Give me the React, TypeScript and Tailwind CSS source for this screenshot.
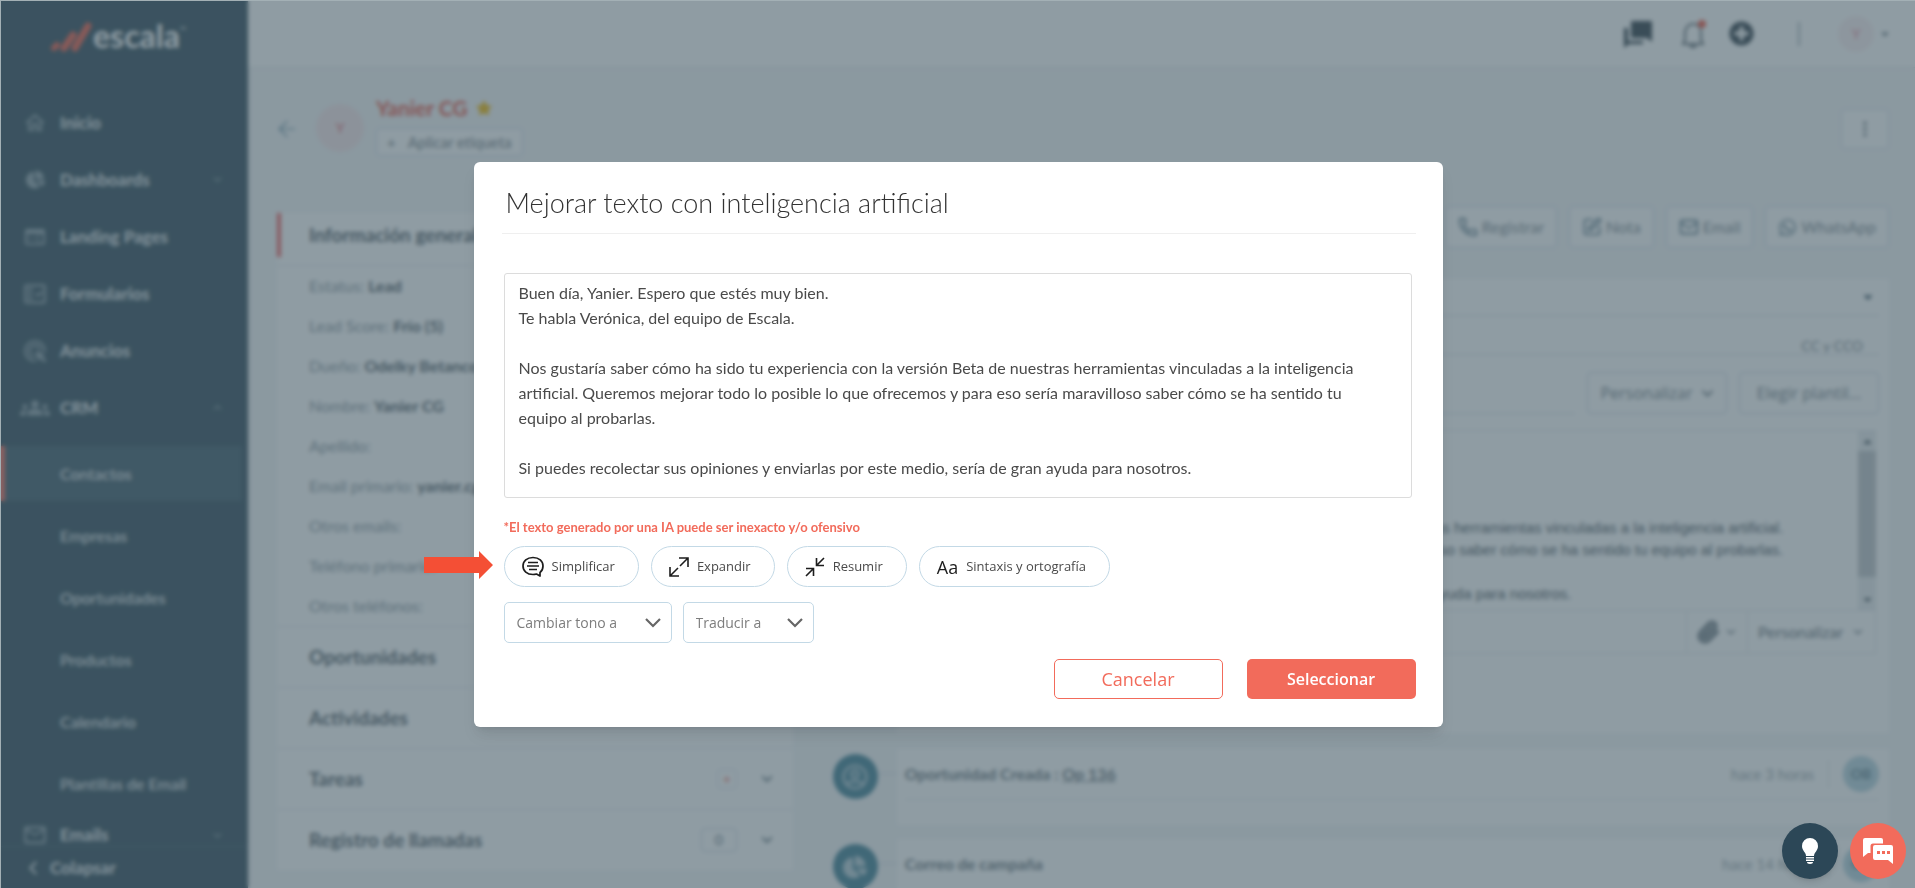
import type { ReactNode } from 'react';
import clsx from 'clsx';
import { ArrowLeft, ChevronDown, ChevronLeft, ChevronUp, Mail, MoreVertical, Paperclip, Phone, SquarePen } from 'lucide-react';
import {
  FaCaretDown,
  FaCaretUp,
  FaChartPie,
  FaChevronDown,
  FaPlusCircle,
  FaRegUserCircle,
  FaStar,
  FaWhatsapp,
} from 'react-icons/fa';
import { MdAdsClick, MdGroups, MdMailOutline, MdOutlineFactCheck, MdOutlineHome, MdWeb } from 'react-icons/md';

interface NavItem {
  label: string;
  icon: ReactNode;
  arrow?: 'up' | 'down';
}

const mainNav: NavItem[] = [
  { label: 'Inicio', icon: <MdOutlineHome size={24} /> },
  { label: 'Dashboards', icon: <FaChartPie size={19} />, arrow: 'down' },
  { label: 'Landing Pages', icon: <MdWeb size={24} /> },
  { label: 'Formularios', icon: <MdOutlineFactCheck size={26} /> },
  { label: 'Anuncios', icon: <MdAdsClick size={26} /> },
  { label: 'CRM', icon: <MdGroups size={30} />, arrow: 'up' },
];

const crmNav = ['Contactos', 'Empresas', 'Oportunidades', 'Productos', 'Calendario', 'Plantillas de Email'];

const contactFields = [
  { label: 'Estatus:', value: 'Lead' },
  { label: 'Lead Score:', value: 'Frío (5)' },
  { label: 'Dueño:', value: 'Odelky Betancourt' },
  { label: 'Nombre:', value: 'Yanier CG' },
  { label: 'Apellido:', value: '' },
  { label: 'Email primario:', value: 'yanier.cg' },
  { label: 'Otros emails:', value: '' },
  { label: 'Teléfono primario:', value: '' },
  { label: 'Otros teléfonos:', value: '' },
];

const message = `Buen día, Yanier. Espero que estés muy bien.
Te habla Verónica, del equipo de Escala.

Nos gustaría saber cómo ha sido tu experiencia con la versión Beta de nuestras herramientas vinculadas a la inteligencia artificial. Queremos mejorar todo lo posible lo que ofrecemos y para eso sería maravilloso saber cómo se ha sentido tu equipo al probarlas.

Si puedes recolectar sus opiniones y enviarlas por este medio, sería de gran ayuda para nosotros.`;

// Draft in the editor, already scrolled past the greeting
const draftLines = [
  'Nos gustaría saber cómo ha sido tu experiencia con la versión Beta de nuestras herramientas vinculadas a la inteligencia artificial.',
  'Queremos mejorar todo lo posible lo que ofrecemos y para eso sería maravilloso saber cómo se ha sentido tu equipo al probarlas.',
  '',
  'Si puedes recolectar sus opiniones y enviarlas por este medio, sería de gran ayuda para nosotros.',
];

function SidebarLink({ item, className = 'h-[57px]' }: { item: NavItem; className?: string }) {
  return (
    <a href="#" className={clsx('flex items-center pr-6 pl-5 text-[#e6ebee]', className)}>
      <span className="flex w-[30px] justify-center text-[#8fa2ac]">{item.icon}</span>
      <span className="ml-[10px] flex-1 text-[17px] leading-4 font-bold">{item.label}</span>
      {item.arrow === 'down' && <ChevronDown size={13} className="text-[#8fa2ac]" />}
      {item.arrow === 'up' && <ChevronUp size={13} className="text-[#8fa2ac]" />}
    </a>
  );
}

function Sidebar() {
  return (
    <aside className="flex w-[248px] shrink-0 flex-col bg-[#2d4857] shadow-md">
      <div className="flex h-[94px] items-start pt-[20px] pl-[50px]">
        <svg width="43" height="32" viewBox="0 0 43 32" fill="none" stroke="#ef5a45" strokeLinecap="round">
          <path d="M4 28l3-3" strokeWidth="6" />
          <path d="M14 28l9-13" strokeWidth="7" />
          <path d="M25 28L38 6" strokeWidth="7" />
        </svg>
        <span className="text-[32px] leading-8 font-bold text-white">escala</span>
        <span className="mt-1 text-[8px] text-white">™</span>
      </div>
      <nav className="min-h-0 flex-1 overflow-hidden">
        {mainNav.map((item) => (
          <SidebarLink key={item.label} item={item} />
        ))}
        <div className="flex flex-col gap-[7px] pt-[10px]">
          {crmNav.map((label, i) => (
            <a
              key={label}
              href="#"
              className={clsx(
                'mr-[6px] flex h-[55px] items-center border-l-[5px] pl-[55px] text-base font-medium text-[#e6ebee]',
                i === 0 ? 'border-[#f26b5b] bg-[#3a5766]' : 'border-transparent'
              )}
            >
              {label}
            </a>
          ))}
        </div>
        <SidebarLink className="h-12" item={{ label: 'Emails', icon: <MdMailOutline size={26} />, arrow: 'down' }} />
      </nav>
      <button className="flex h-[42px] shrink-0 items-center gap-[6px] border-t border-[#3f5b69] pl-[22px] text-[17px] font-bold text-[#e6ebee]">
        <ChevronLeft size={22} />
        Colapsar
      </button>
    </aside>
  );
}

function TopBar() {
  return (
    <header className="flex h-[68px] shrink-0 items-center justify-end border-b border-[#e3e6ea] bg-white pr-6 text-[#2b3a44]">
      <button aria-label="Mensajes" className="mr-7">
        <svg width="30" height="28" viewBox="0 0 30 28" fill="currentColor">
          <path d="M9 1h19a1 1 0 011 1v20l-5-4H9a1 1 0 01-1-1V2a1 1 0 011-1z" />
          <path d="M1 8h4v13h15v3H6l-5 4z" />
        </svg>
      </button>
      <button aria-label="Notificaciones" className="mr-[22px]">
        <svg width="26" height="28" viewBox="0 0 26 28" fill="none" stroke="currentColor" strokeWidth="1.600">
          <path d="M2 24h20l-2-4v-8c0-5-3-8-8-8s-7 3-8 8v8zM9 25c1 3 5 3 6 0" />
          <circle cx="21" cy="4" r="4" fill="#f0503c" stroke="none" />
        </svg>
      </button>
      <button aria-label="Agregar" className="mr-[44px]">
        <FaPlusCircle size={25} />
      </button>
      <span className="mr-[38px] h-6 w-[2px] bg-[#a9b4ba]" />
      <span className="flex size-9 items-center justify-center rounded-full bg-[#fbf0f2] text-sm text-[#e58a9b]">Y</span>
      <FaCaretDown size={12} className="ml-[5px] text-[#66757e]" />
    </header>
  );
}

function ContactHeader() {
  return (
    <div className="flex h-[145px] items-start justify-between pt-8">
      <div className="-ml-[3px] flex items-start">
        <ArrowLeft size={26} strokeWidth={1} className="mt-4 text-[#4f7f93]" />
        <span className="mt-1 ml-4 flex size-12 items-center justify-center rounded-full bg-[#f8e7e9] text-sm text-[#e0606b]">Y</span>
        <div className="ml-3">
          <h1 className="flex h-[28px] items-start gap-2 text-[21px] leading-4 font-bold text-[#e8503f]">
            Yanier CG <FaStar size={16} className="text-[#f2b705]" />
          </h1>
          <button className="flex h-7 items-center gap-3 rounded border border-[#cdd5e8] bg-white px-[10px] text-[15px] text-[#6d7780]">
            <span>+</span> Aplicar etiqueta
          </button>
        </div>
      </div>
      <button aria-label="Más opciones" className="mt-[9px] flex h-10 w-12 items-center justify-center rounded border border-[#d5dbea] bg-white text-[#52616a]">
        <MoreVertical size={20} />
      </button>
    </div>
  );
}

function Section({ title, children }: { title: string; children?: ReactNode }) {
  return (
    <div className="flex h-[61px] items-center justify-between border-t border-[#e4e8ec] pr-5 pl-8">
      <h2 className="text-[19px] font-bold text-[#4b575f]">{title}</h2>
      <div className="flex items-center gap-6 text-[#5c6f7a]">{children}</div>
    </div>
  );
}

function ContactPanel() {
  return (
    <section className="w-[32%] shrink-0 self-start bg-white">
      <div className="flex h-[52px] items-start">
        <div className="flex h-[44px] items-center border-l-4 border-[#ef5a5a] pl-7">
          <h2 className="text-[19px] font-bold text-[#4b575f]">Información general</h2>
        </div>
      </div>
      <dl className="border-t border-[#e4e8ec] pl-8">
        {contactFields.map((field) => (
          <div key={field.label} className="flex h-10 items-center gap-1 text-base">
            <dt className="text-[#84919a]">{field.label}</dt>
            <dd className="font-bold text-[#4b575f]">{field.value}</dd>
          </div>
        ))}
      </dl>
      <Section title="Oportunidades" />
      <Section title="Actividades" />
      <Section title="Tareas">
        <span className="flex size-5 items-center justify-center rounded border border-[#dbe1ee] text-sm text-[#f0604f]">+</span>
        <FaChevronDown size={12} />
      </Section>
      <Section title="Registro de llamadas">
        <span className="flex h-6 w-9 items-center justify-center rounded border border-[#cdd6e6] text-sm">0</span>
        <FaChevronDown size={12} />
      </Section>
    </section>
  );
}

const actions = [
  { label: 'Registrar', icon: <Phone size={20} /> },
  { label: 'Nota', icon: <SquarePen size={20} /> },
  { label: 'Email', icon: <Mail size={20} /> },
  { label: 'WhatsApp', icon: <FaWhatsapp size={19} /> },
];

function EmailEditor() {
  return (
    <div className="ml-16 h-[454px] bg-white pr-[10px] pl-[17px]">
      <div className="flex h-[37px] items-center justify-end border-b border-[#d5dbe6] pr-1">
        <FaCaretDown size={14} className="text-[#3d5765]" />
      </div>
      <div className="flex h-[39px] items-end justify-end border-b border-[#d5dbe6] pr-4 text-sm leading-4 text-[#77838b]">CC y CCO</div>
      <div className="flex gap-3 pt-[17px] text-base text-[#6f7c85] [font-family:'Open_Sans',sans-serif]">
        <div className="flex-1 border-b border-[#d5dbe6]" />
        <button className="flex h-[42px] w-[140px] items-center justify-center gap-2 rounded border border-[#cdd5e8]">
          Personalizar <FaChevronDown size={13} />
        </button>
        <button className="h-[42px] w-[140px] rounded border border-[#cdd5e8]">Elegir plantil...</button>
      </div>
      <div className="mt-4 mr-[3px] flex h-[180px] overflow-hidden border-t border-[#e0e5ea]">
        <div className="flex-1 pt-[86px] pl-1 text-[15px] leading-[22px] whitespace-nowrap text-[#45515a] [font-family:'Liberation_Sans',Arial,sans-serif]">
          {draftLines.map((line, i) => (
            <p key={i} className="min-h-[22px]">
              {line}
            </p>
          ))}
        </div>
        <div className="flex w-[18px] flex-col items-center justify-between bg-[#e9ecee] text-[#4d5a62]">
          <FaCaretUp size={13} className="mt-1" />
          <div className="mb-[14px] h-[126px] w-full bg-[#bfc4c7]" />
          <FaCaretDown size={13} className="mb-1" />
        </div>
      </div>
      <div className="mr-[3px] flex h-[44px] items-center justify-end border-y border-r border-[#e0e5ea] text-base text-[#5e6b74]">
        <button aria-label="Adjuntar" className="flex h-full items-center gap-1 border-x border-[#e0e5ea] px-[9px]">
          <Paperclip size={24} strokeWidth={3} /> <ChevronDown size={14} />
        </button>
        <button className="flex h-full items-center gap-2 px-[10px]">
          Personalizar <ChevronDown size={14} />
        </button>
      </div>
    </div>
  );
}

interface TimelineItemProps {
  icon: ReactNode;
  time: string;
  children: ReactNode;
}

function TimelineItem({ icon, time, children }: TimelineItemProps) {
  return (
    <article className="flex">
      <span className="mt-[5px] flex size-[45px] items-center justify-center rounded-full bg-[#3b7d92] text-[#b5cdd6]">{icon}</span>
      <span className="mt-6 h-px w-[19px] bg-[#d0d9e4]" />
      <div className="h-[76px] flex-1 bg-white pr-[10px] pl-2">
        <div className="flex h-[51px] items-center border-b border-[#e6eaee]">
          <h3 className="flex-1 text-base font-bold text-[#65727a]">{children}</h3>
          <time className="text-[15px] text-[#98a3a9]">{time}</time>
          <span className="mx-[14px] h-7 w-px bg-[#dfe4e8]" />
          <span className="flex size-9 items-center justify-center rounded-full bg-[#b4d3de] text-sm font-bold text-[#5c7f8d]">OB</span>
        </div>
      </div>
    </article>
  );
}

function Activity() {
  return (
    <section className="min-w-0 flex-1">
      <div className="-mt-[7px] flex h-[73px] items-start justify-end gap-3">
        {actions.map((action) => (
          <button key={action.label} className="flex h-[42px] items-center gap-1 rounded border border-[#cfd7e9] bg-white px-3 text-base text-[#7a868e]">
            <span className="text-[#4f6f80]">{action.icon}</span>
            {action.label}
          </button>
        ))}
      </div>
      <EmailEditor />
      <div className="mt-4 flex flex-col gap-[14px]">
        <TimelineItem icon={<FaRegUserCircle size={26} />} time="hace 3 horas">
          Oportunidad Creada : <a href="#" className="underline">Op 136</a>
        </TimelineItem>
        <TimelineItem icon={<FaChartPie size={24} />} time="hace 14 horas">
          Correo de campaña
        </TimelineItem>
      </div>
    </section>
  );
}

function SimplifyIcon() {
  return (
    <svg width="22" height="22" viewBox="0 0 22 22" fill="none" stroke="currentColor" strokeWidth="1.700">
      <path d="M18 20V16.500C20 15 21 12.500 21 10C21 5 17 1.500 11 1.500S1 5 1 10s4 8.500 10 8.500c1.500 0 2.500-.2 3.500-.5z" strokeLinejoin="round" />
      <path d="M6 6.500h10M5 10h12M7 13.500h8" strokeWidth="1.500" />
    </svg>
  );
}

function ExpandIcon() {
  return (
    <svg width="20" height="20" viewBox="0 0 20 20" fill="none" stroke="currentColor" strokeWidth="1.600">
      <path d="M10 1h9v9M19 1l-8 8M1 10v9h9M1 19l8-8" />
    </svg>
  );
}

function ShrinkIcon() {
  return (
    <svg width="20" height="20" viewBox="0 0 20 20" fill="none" stroke="currentColor" strokeWidth="1.600">
      <path d="M11.500 1v7.500H19M11.500 8.500L19 1M1 11.500h7.500V19M8.500 11.500L1 19" />
    </svg>
  );
}

const aiTools = [
  { label: 'Simplificar', icon: <SimplifyIcon /> },
  { label: 'Expandir', icon: <ExpandIcon /> },
  { label: 'Resumir', icon: <ShrinkIcon /> },
  { label: 'Sintaxis y ortografía', icon: <span className="text-lg font-medium">Aa</span> },
];

function ToolSelect({ label, className }: { label: string; className: string }) {
  return (
    <div className={clsx('relative h-[41px]', className)}>
      <select
        aria-label={label}
        className="h-full w-full appearance-none rounded-[5px] border border-[#c3d9e6] bg-white pr-8 pl-3 text-sm text-[#7d7d7d] [font-family:'Open_Sans',sans-serif]"
      >
        <option>{label}</option>
      </select>
      <svg className="pointer-events-none absolute top-[15px] right-[11px]" width="16" height="12" viewBox="0 0 16 12" fill="none" stroke="#666" strokeWidth="2.200">
        <path d="M1 2l7 7 7-7" />
      </svg>
    </div>
  );
}

function ImproveTextModal() {
  return (
    <div role="dialog" aria-labelledby="modal-title" className="relative w-full max-w-[969px] rounded-md bg-white pt-[15px] pr-[27px] pb-7 pl-7 shadow-lg">
      <h2 id="modal-title" className="flex h-[57px] items-center border-b border-[#efefef] pb-1 pl-1 text-[27px] font-light text-[#333]">
        Mejorar texto con inteligencia artificial
      </h2>
      <div className="pt-[39px] pr-1 pl-[2px]">
        <textarea
          aria-labelledby="modal-title"
          defaultValue={message}
          className="block h-[225px] w-full resize-none overflow-hidden rounded-[3px] border border-[#dcdcdc] py-[6px] pr-5 pl-[14px] text-base leading-[25px] text-[#4a4a4a]"
        />
        <p className="mt-[19px] text-[13px] leading-5 font-bold text-[#f26b5b]">*El texto generado por una IA puede ser inexacto y/o ofensivo</p>
        <div className="mt-[9px] flex gap-3">
          {aiTools.map((tool) => (
            <button
              key={tool.label}
              className="flex h-[41px] items-center gap-2 rounded-full border border-[#c3d9e6] pr-[23px] pl-[17px] text-[13px] text-[#4a4a4a] [font-family:'Open_Sans',sans-serif]"
            >
              <span className="text-[#1d1d1d]">{tool.icon}</span>
              {tool.label}
            </button>
          ))}
        </div>
        <div className="mt-[15px] flex gap-[11px]">
          <ToolSelect label="Cambiar tono a" className="w-[168px]" />
          <ToolSelect label="Traducir a" className="w-[131px]" />
        </div>
      </div>
      <div className="mt-4 flex justify-end gap-6 [font-family:'Open_Sans',sans-serif]">
        <button className="h-10 w-[169px] rounded-[5px] border border-[#f26b5b] text-lg leading-6 font-medium text-[#f26b5b]">Cancelar</button>
        <button className="h-10 w-[169px] rounded-[5px] bg-[#f26b5b] text-base font-semibold text-white">Seleccionar</button>
      </div>
      <svg className="absolute top-[389px] -left-[50px]" width="70" height="28" viewBox="0 0 70 28" fill="#f44f35">
        <path d="M0 6h55V0l14 14-14 14v-6H0z" />
      </svg>
    </div>
  );
}

function FloatingButtons() {
  return (
    <div className="fixed right-[9px] bottom-[9px] flex gap-3">
      <button aria-label="Ideas" className="flex size-14 items-center justify-center rounded-full bg-[#2c4757] shadow-md">
        <svg width="18" height="28" viewBox="0 0 18 28" fill="#fff">
          <path d="M9 1a8 8 0 00-8 8c0 5 4 6 4 10h8c0-4 4-5 4-10a8 8 0 00-8-8zM5 20h8v1.500H5zM5 22.500h8V24H5zM6 25h6c0 1-1 2-3 2s-3-1-3-2z" />
        </svg>
      </button>
      <button aria-label="Chat" className="flex size-14 items-center justify-center rounded-full bg-[#f26b5b]">
        <svg width="30" height="26" viewBox="0 0 30 26" fill="#fff">
          <path d="M2 0h16a2 2 0 012 2v3.500H10A2.500 2.500 0 007.500 8v7H5l-5 4V2a2 2 0 012-2z" />
          <path fillRule="evenodd" d="M12 7h16a2 2 0 012 2v17l-5-4H12a2 2 0 01-2-2V9a2 2 0 012-2zm2 6v3h3v-3zm5 0v3h3v-3zm5 0v3h3v-3z" />
        </svg>
      </button>
    </div>
  );
}

export default function App() {
  return (
    <div className="relative h-screen overflow-hidden bg-[#f5f7f8] [font-family:Lato,sans-serif]">
      <div className="flex h-full">
        <Sidebar />
        <div className="flex min-w-0 flex-1 flex-col">
          <TopBar />
          <main className="min-h-0 flex-1 overflow-hidden pr-[26px] pl-[29px]">
            <ContactHeader />
            <div className="flex gap-10">
              <ContactPanel />
              <Activity />
            </div>
          </main>
        </div>
      </div>
      <div className="fixed inset-0 flex items-center justify-center border-t border-l border-[#a3b0b5] bg-[#455a66]/60 backdrop-blur-[2px]">
        <ImproveTextModal />
      </div>
      <FloatingButtons />
    </div>
  );
}
